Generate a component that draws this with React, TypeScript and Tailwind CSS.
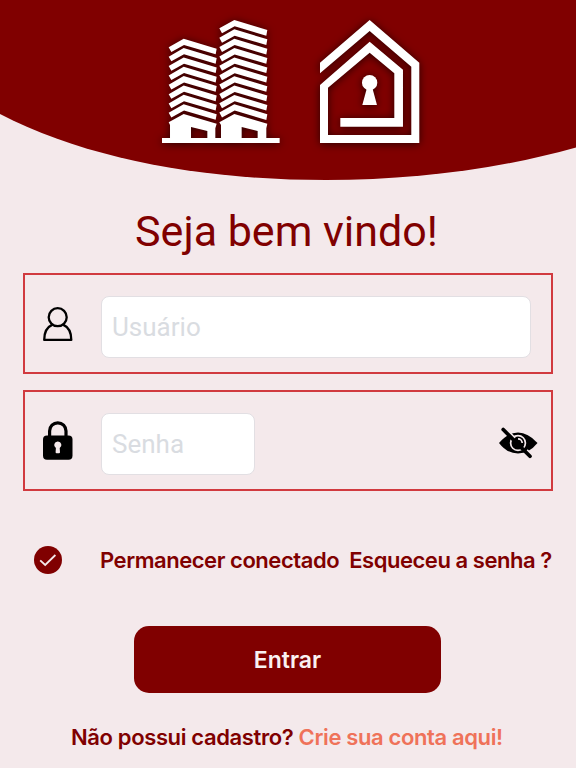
import { useState } from 'react';

const LEFT_FLOORS = [0, 1, 2, 3, 4, 5, 6, 7];
const RIGHT_FLOORS = [0, 1, 2, 3, 4, 5, 6, 7, 8, 9];

function BuildingsLogo() {
  return (
    <svg viewBox="0 0 354 370" className="h-[123.3px] w-[118px] overflow-visible fill-white drop-shadow-[0_1px_4px_rgba(0,0,0,0.7)]">
      {LEFT_FLOORS.map(i => (
        <path key={i} transform={`translate(0 ${i * 28.1})`} d="M20 82 65 56 164 86 161 103 66 75 28 96Z" />
      ))}
      {RIGHT_FLOORS.map(i => (
        <path key={i} transform={`translate(0 ${i * 28.1})`} d="M172 25 217 0 316 30 313 47 218 19 180 40Z" />
      ))}
      <path d="M0 354H24V315L20 307 65 282 164 311 160 325V354H177V315L172 307 217 282 316 311 313 325V354H353V369H0ZM87 321V354H136V333ZM239 321V354H287V333Z" fillRule="evenodd" />
    </svg>
  );
}

function HouseLogo() {
  return (
    <svg viewBox="0 0 298 369" className="h-[123px] w-[99.3px] overflow-visible fill-white drop-shadow-[0_1px_4px_rgba(0,0,0,0.7)]">
      <path d="M0 128 149 0 298 128V369H0V195L149 65 249 149V320H61V294H223V160L149 98 24 203V345H274V140L149 33 0 160Z" />
      <circle cx="149" cy="188" r="23" />
      <path d="M141 203H157L171 255H127Z" />
    </svg>
  );
}

function UserIcon() {
  return (
    <svg viewBox="0 0 30 35" className="mt-0.5 h-[35px] w-[30px] fill-none stroke-black stroke-[2.3]">
      <circle cx="14.7" cy="10.2" r="9" />
      <path d="M9.5 17.6C4 20 1.2 25.5 1.2 32.9H28.3C28.3 25.5 25.5 20 20 17.6" strokeLinejoin="round" />
    </svg>
  );
}

function LockIcon() {
  return (
    <svg viewBox="0 0 30 39" className="h-[39px] w-[30px]">
      <path d="M6.6 17V10A8.2 8.2 0 0 1 23 10V17" fill="none" stroke="#000" strokeWidth="3.2" />
      <rect y="14.5" width="29.5" height="24.3" rx="4" />
      <path d="M14.8 20.5A3.5 3.5 0 0 1 16.7 27L17 31.2Q17 32.3 16 32.3H13.6Q12.6 32.3 12.6 31.2L12.9 27A3.5 3.5 0 0 1 14.8 20.5Z" fill="#f4e9eb" />
    </svg>
  );
}

function EyeOffIcon() {
  return (
    <svg viewBox="0 0 40 32" className="h-8 w-10">
      <path d="M1 16Q10 5.5 20 5.5T39.5 16Q31 26.5 20 26.5T1 16Z" />
      <circle cx="20" cy="16" r="7.4" fill="none" stroke="#f4e9eb" strokeWidth="1.7" />
      <path d="M20 11.8A4.2 4.2 0 0 1 24.2 16" fill="none" stroke="#f4e9eb" strokeWidth="1.7" />
      <path d="M8.5 2.5 17 11M29 23 34.5 28.5" stroke="#f4e9eb" strokeWidth="2" />
      <path d="M5.2 2.5 32 29.3" stroke="#000" strokeWidth="3.7" strokeLinecap="round" />
    </svg>
  );
}

const fieldClass = 'mt-[7px] h-[62px] rounded-lg border border-[#e2dfe3] bg-white px-[10px] font-[Roboto,sans-serif] text-[26px] text-gray-800 outline-none placeholder:text-[#d9dce1]';

export default function App() {
  const [stayConnected, setStayConnected] = useState(true);
  const [showPassword, setShowPassword] = useState(false);

  return (
    <div className="flex h-[768px] w-[576px] flex-col overflow-hidden bg-[#f4e9eb] font-[Inter,sans-serif] text-[#800000]">
      <header className="relative h-[181px] shrink-0">
        <svg viewBox="0 0 576 181" className="absolute inset-0 h-full w-full">
          <path d="M0 0H576V147.5C500 169 413 180 326 180C207 180 88 160 0 114Z" fill="#800000" />
        </svg>
        <div className="relative flex gap-[39.5px] pt-5 pl-[162.3px]">
          <BuildingsLogo />
          <HouseLogo />
        </div>
      </header>

      <h1 className="mt-[23px] pr-[3px] text-center font-[Roboto,sans-serif] text-[43px] leading-[54px]">Seja bem vindo!</h1>

      <form className="flex flex-col px-[23px]" onSubmit={e => e.preventDefault()}>
        <div className="mt-[15px] flex h-[101px] items-center border-2 border-[#d13a3f] pr-5 pl-[18px]">
          <UserIcon />
          <input className={`${fieldClass} ml-[28px] min-w-0 flex-1`} placeholder="Usuário" />
        </div>
        <div className="mt-4 flex h-[101px] items-center border-2 border-[#d13a3f] pr-[13px] pl-[18px]">
          <LockIcon />
          <input className={`${fieldClass} ml-[28px] w-[154px]`} type={showPassword ? 'text' : 'password'} placeholder="Senha" />
          <button type="button" className="mt-1 ml-auto" onClick={() => setShowPassword(!showPassword)}>
            <EyeOffIcon />
          </button>
        </div>

        <div className="mt-[53px] flex h-8 items-center pl-[11px] text-[22px] font-semibold tracking-[-0.45px] whitespace-nowrap">
          <button type="button" className="flex size-7 items-center justify-center rounded-full bg-[#800000]" onClick={() => setStayConnected(!stayConnected)}>
            {stayConnected && (
              <svg viewBox="0 0 28 28" className="size-7 fill-none stroke-[#f4e9eb] stroke-[1.8]">
                <path d="M6.2 14.3 11.2 19 21.4 9" />
              </svg>
            )}
          </button>
          <span className="ml-[38px]">Permanecer conectado</span>
          <a className="ml-[10px]">Esqueceu a senha ?</a>
        </div>

        <button className="mt-[50px] ml-[111px] h-[67px] w-[307px] rounded-[15px] bg-[#800000] pt-0.5 text-[23px] font-semibold text-[#f9f1f2]">
          Entrar
        </button>
      </form>

      <p className="mt-[28px] pl-[71px] text-[22px] leading-8 font-semibold tracking-[-0.37px] whitespace-nowrap">
        Não possui cadastro? <a className="text-[#ef7259]">Crie sua conta aqui!</a>
      </p>
    </div>
  );
}
